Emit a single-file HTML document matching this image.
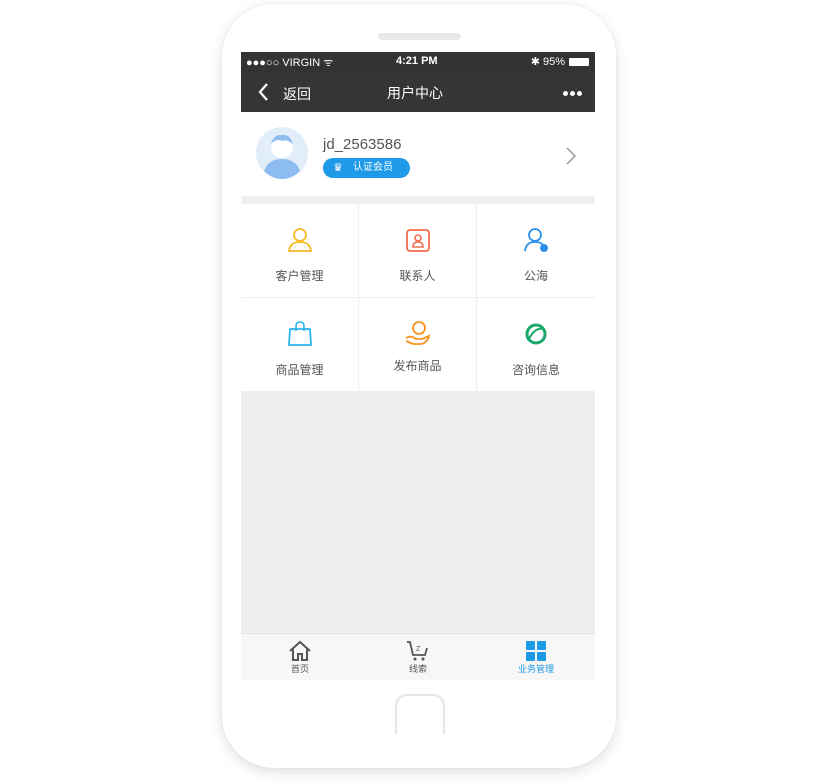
<!DOCTYPE html>
<html><head><meta charset="utf-8"><style>
*{margin:0;padding:0;box-sizing:border-box}
body{width:837px;height:784px;background:#fff;position:relative;overflow:hidden;font-family:"Liberation Sans","Noto Sans CJK SC",sans-serif}
.phone{position:absolute;left:222px;top:4px;width:394px;height:764px;border-radius:52px;background:#fff;box-shadow:0 4px 14px rgba(0,0,0,.12),0 0 3px rgba(0,0,0,.06)}
.speaker{position:absolute;left:378px;top:33px;width:83px;height:7px;border-radius:4px;background:#e8e8ea}
.home{position:absolute;left:395px;top:694px;width:50px;height:40px;border-radius:12px 12px 0 0;border:2px solid #e6e6ea;border-bottom:none}
.screen{position:absolute;left:241px;top:52px;width:354px;height:628px;background:#efefef;overflow:hidden}
.status{height:20px;background:#333;color:#fff;font-size:11px;position:relative}
.nav{height:40px;background:#353535;color:#fff;position:relative;font-size:14px}
.profile{position:absolute;top:60px;left:0;width:354px;height:84px;background:#fff}
.grid{position:absolute;top:152px;left:0;width:354px;height:188px;background:#fff}
.cell{position:absolute;width:118px;height:94px;border-right:1px solid #eee;border-bottom:1px solid #eee;text-align:center}
.cell span{position:absolute;left:0;right:0;top:63px;font-size:12px;color:#555}
.cell svg{position:absolute;left:46px;top:23px}
.tab{position:absolute;top:581px;left:0;width:354px;height:47px;background:#f7f7f7;border-top:1px solid #e2e2e2}
.tab div{position:absolute;top:0;width:118px;text-align:center;font-size:9px;color:#555}
.dot{position:absolute;top:19px;width:5px;height:5px;border-radius:50%;background:#fff}
</style></head><body>
<div class="phone"></div>
<div class="speaker"></div>
<div class="home"></div>
<div class="screen">
 <div class="status"><span style="position:absolute;left:5px;top:3px">●●●○○ VIRGIN ᯤ</span><span style="position:absolute;left:155px;top:3px;font-weight:bold">4:21 PM</span><span style="position:absolute;right:30px;top:3px">✱ 95%</span><span style="position:absolute;right:6px;top:6px;width:20px;height:8px;background:#fff;border-radius:1px"></span></div>
 <div class="nav"><svg style="position:absolute;left:16px;top:10px" width="12" height="20"><path d="M10 2 L3 10 L10 18" stroke="#fff" stroke-width="2.2" fill="none"/></svg><span style="position:absolute;left:42px;top:12px">返回</span><span style="position:absolute;left:146px;top:11px">用户中心</span><span class="dot" style="left:322px"></span><span class="dot" style="left:329px"></span><span class="dot" style="left:336px"></span></div>
 <div class="profile">
  <svg style="position:absolute;left:15px;top:15px" width="52" height="52"><circle cx="26" cy="26" r="26" fill="#e2edfa"/><circle cx="26" cy="20" r="11" fill="#fff"/><path d="M15 17 Q18 7 26 8 Q34 7 37 17 Q30 12 26 14 Q21 11 15 17Z" fill="#8dbdf0"/><path d="M8 44 Q12 32 26 32 Q40 32 44 44 Q36 52 26 52 Q16 52 8 44Z" fill="#8dbdf0"/></svg>
  <div style="position:absolute;left:82px;top:24px;font-size:15px;color:#555">jd_2563586</div>
  <div style="position:absolute;left:82px;top:46px;width:87px;height:20px;border-radius:10px;background:#1e9ae8;color:#fff;font-size:10px;line-height:20px;padding-left:30px">认证会员<span style="position:absolute;left:10px;top:0;font-size:11px">♛</span></div>
  <svg style="position:absolute;left:325px;top:35px" width="10" height="18"><path d="M1 1 L9 9 L1 17" stroke="#999" stroke-width="1.5" fill="none"/></svg>
 </div>
 <div class="grid">
  <div class="cell" style="left:0;top:0"><svg width="26" height="26"><circle cx="13" cy="8" r="6" fill="none" stroke="#f7b924" stroke-width="1.8"/><path d="M2 24 Q3 15 13 15 Q23 15 24 24Z" fill="none" stroke="#f7b924" stroke-width="1.8"/></svg><span>客户管理</span></div>
  <div class="cell" style="left:118px;top:0"><svg width="26" height="26"><rect x="2" y="3" width="22" height="21" rx="3" fill="none" stroke="#f26b4d" stroke-width="1.8"/><circle cx="13" cy="11" r="3" fill="none" stroke="#f26b4d" stroke-width="1.6"/><path d="M8 20 Q8 15 13 15 Q18 15 18 20Z" fill="none" stroke="#f26b4d" stroke-width="1.6"/></svg><span>联系人</span></div>
  <div class="cell" style="left:236px;top:0;border-right:none"><svg width="26" height="26"><circle cx="12" cy="8" r="6" fill="none" stroke="#2d8fec" stroke-width="1.8"/><path d="M2 24 Q3 15 12 15 Q18 15 20 18" fill="none" stroke="#2d8fec" stroke-width="1.8"/><circle cx="21" cy="21" r="4" fill="#2d8fec"/></svg><span>公海</span></div>
  <div class="cell" style="left:0;top:94px"><svg width="26" height="26"><path d="M3 8 H23 L24 24 H2Z" fill="none" stroke="#2bb5ef" stroke-width="1.8"/><path d="M9 10 V5 Q9 1 13 1 Q17 1 17 5 V10" fill="none" stroke="#2bb5ef" stroke-width="1.6"/></svg><span>商品管理</span></div>
  <div class="cell" style="left:118px;top:94px"><svg width="26" height="26"><circle cx="14" cy="7" r="6" fill="none" stroke="#f7931e" stroke-width="1.8"/><path d="M1 17 Q6 14 11 18 H17 L24 15 Q22 22 16 23 H8 L1 20" fill="none" stroke="#f7931e" stroke-width="1.8"/></svg><span style="top:59px">发布商品</span></div>
  <div class="cell" style="left:236px;top:94px;border-right:none"><svg width="26" height="26"><circle cx="13" cy="13" r="9" fill="none" stroke="#1ba86a" stroke-width="3"/><path d="M6 18 Q12 6 20 8" stroke="#1ba86a" stroke-width="2" fill="none"/></svg><span>咨询信息</span></div>
 </div>
 <div class="tab">
  <div style="left:0"><svg style="display:block;margin:6px auto 0" width="24" height="22"><path d="M2 11 L12 2 L22 11 M5 9 V20 H10 V14 H14 V20 H19 V9" fill="none" stroke="#555" stroke-width="2"/></svg>首页</div>
  <div style="left:118px"><svg style="display:block;margin:6px auto 0" width="24" height="22"><path d="M1 2 H4 L7 15 H19 L21 8" fill="none" stroke="#555" stroke-width="1.8"/><circle cx="9" cy="19" r="1.5" fill="#555"/><circle cx="17" cy="19" r="1.5" fill="#555"/><text x="10" y="11" font-size="7" fill="#555" font-family="Liberation Sans">Z</text></svg>线索</div>
  <div style="left:236px;color:#1e9ae8"><svg style="display:block;margin:6px auto 0" width="22" height="22"><rect x="1" y="1" width="9" height="9" rx="1" fill="#1e9ae8"/><rect x="12" y="1" width="9" height="9" rx="1" fill="#1e9ae8"/><rect x="1" y="12" width="9" height="9" rx="1" fill="#1e9ae8"/><rect x="12" y="12" width="9" height="9" rx="1" fill="#1e9ae8"/></svg>业务管理</div>
 </div>
</div>
</body></html>
